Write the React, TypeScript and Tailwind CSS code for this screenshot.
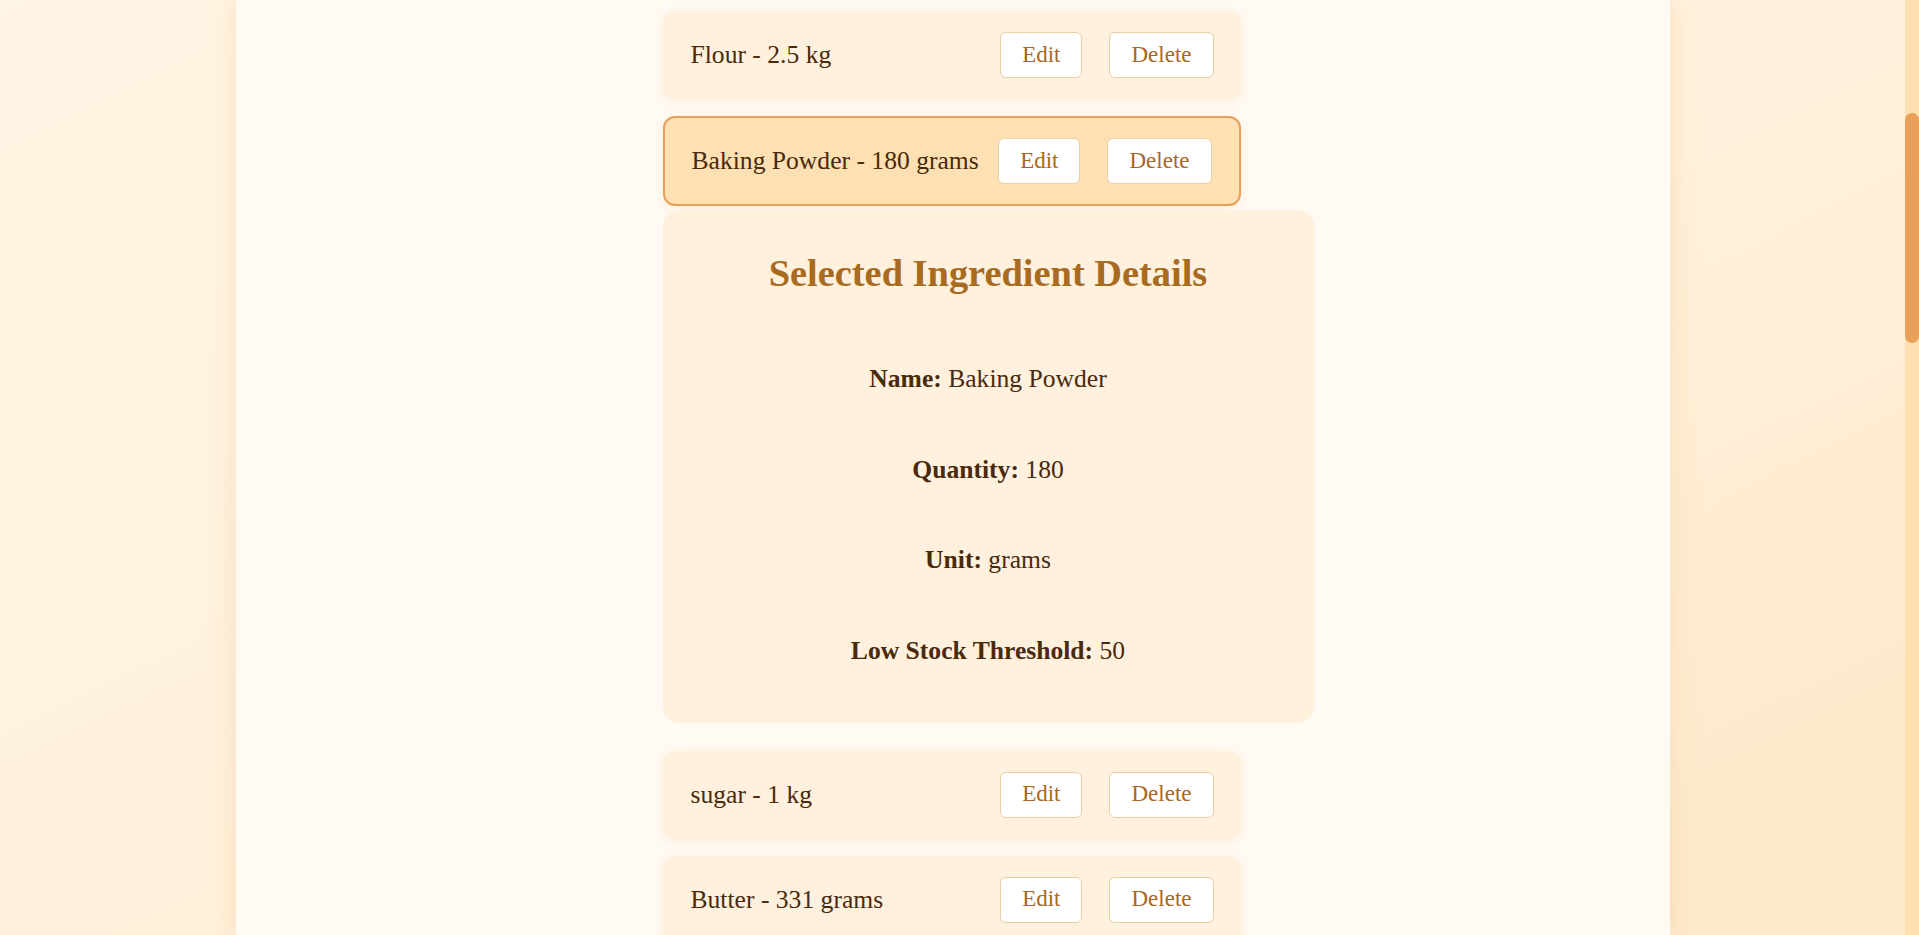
import React from "react";

type Ingredient = {
  name: string;
  quantity: number | string;
  unit: string;
  threshold: number;
};

const ingredients: Ingredient[] = [
  { name: "Flour", quantity: 2.5, unit: "kg", threshold: 1 },
  { name: "Baking Powder", quantity: 180, unit: "grams", threshold: 50 },
  { name: "sugar", quantity: 1, unit: "kg", threshold: 1 },
  { name: "Butter", quantity: 331, unit: "grams", threshold: 100 },
];

const serif = "font-['Liberation_Serif','Times_New_Roman',serif]";

function IngredientRow({ item, selected }: { item: Ingredient; selected: boolean }) {
  return (
    <div
      className={
        selected
          ? "w-[578px] flex items-center justify-between rounded-xl border-2 border-[#e8a05a] bg-[#ffe0b2] pl-[27px] pr-[27px] py-[20px] shadow-[0_2px_10px_rgba(230,160,90,0.15)]"
          : "w-[578px] flex items-center justify-between rounded-xl bg-[#fff1de] pl-[28px] pr-[27px] py-[21px] shadow-[0_2px_12px_rgba(240,190,130,0.18)]"
      }
    >
      <span className="text-[25.6px] leading-[30px] text-[#4a2a0c]">
        {item.name} - {item.quantity} {item.unit}
      </span>
      <div className="flex gap-[27px]">
        <button className="h-[46px] rounded-md border border-[#e7cfa6] bg-white px-[21px] text-[23px] text-[#a8681f]">
          Edit
        </button>
        <button className="h-[46px] rounded-md border border-[#e7cfa6] bg-white px-[21px] text-[23px] text-[#a8681f]">
          Delete
        </button>
      </div>
    </div>
  );
}

function Details({ item }: { item: Ingredient }) {
  return (
    <div className="mt-[4px] mb-[28px] w-[651px] rounded-2xl bg-[#fff1de] pt-[41px] pb-[57px] text-center">
      <h2 className="text-[38.4px] leading-[44px] font-bold text-[#a86b20]">Selected Ingredient Details</h2>
      <div className="mt-[69px] flex flex-col gap-[60.5px] text-[25.6px] leading-[30px] text-[#4a2a0c]">
        <p>
          <strong>Name:</strong> {item.name}
        </p>
        <p>
          <strong>Quantity:</strong> {item.quantity}
        </p>
        <p>
          <strong>Unit:</strong> {item.unit}
        </p>
        <p>
          <strong>Low Stock Threshold:</strong> {item.threshold}
        </p>
      </div>
    </div>
  );
}

export default function App() {
  const selectedIndex = 1;
  return (
    <div className={`${serif} h-[935px] overflow-hidden flex bg-linear-to-br from-[#fff5e4] via-[#fff1dc] to-[#fde8c8]`}>
      <div className="flex-1 flex justify-center">
        <main className="w-[1434px] bg-[#fffaf3] shadow-[0_0_24px_rgba(235,190,130,0.35)] pl-[427px] pt-[11px]">
          <div className="flex flex-col">
            {ingredients.map((item, i) => (
              <div key={item.name} className={i === selectedIndex ? "" : "mb-[17px]"}>
                <IngredientRow item={item} selected={i === selectedIndex} />
                {i === selectedIndex && <Details item={item} />}
              </div>
            ))}
          </div>
        </main>
      </div>
      <div className="w-[14px] bg-[#fddfb0] flex flex-col">
        <div className="mt-[113px] h-[230px] w-[14px] rounded-full bg-[#e8a05a]" />
      </div>
    </div>
  );
}
